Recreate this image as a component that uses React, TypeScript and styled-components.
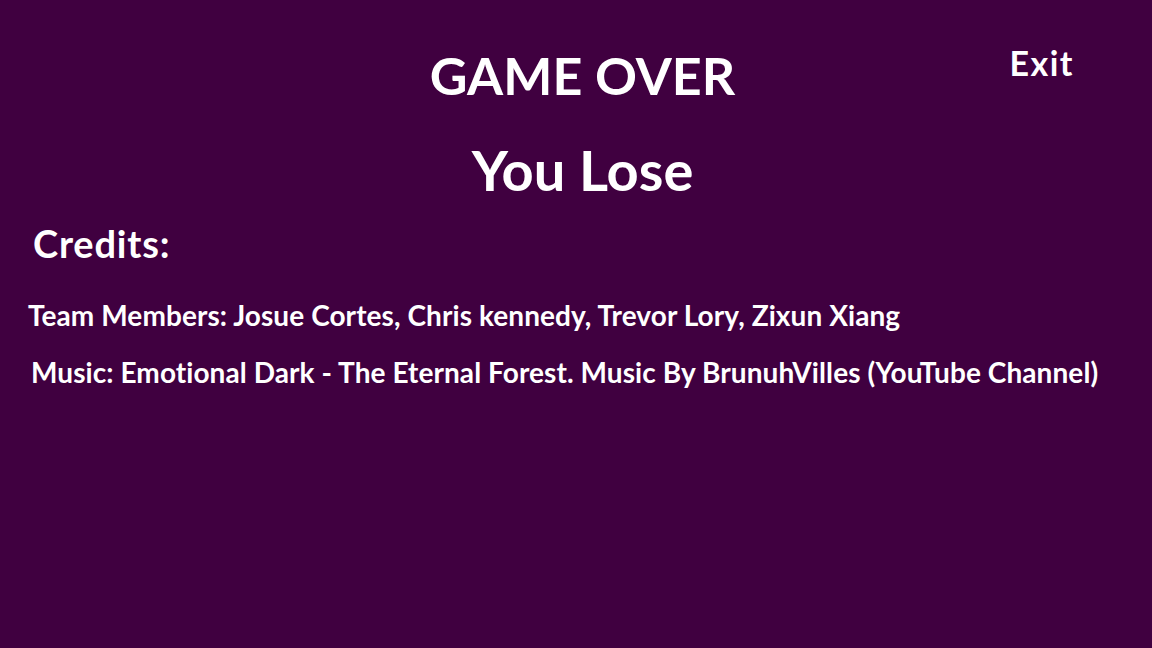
import React from "react";
import styled, { createGlobalStyle } from "styled-components";

const Global = createGlobalStyle`
  html, body { margin: 0; padding: 0; background: #400040; }
  body { font-family: "Lato", "Open Sans", sans-serif; color: #ffffff; }
  #root { width: 1152px; height: 648px; }
`;

const Page = styled.main`
  width: 1152px;
  height: 648px;
  background: #400040;
  display: flex;
  flex-direction: column;
  overflow: hidden;
`;

const Header = styled.header`
  display: grid;
  grid-template-columns: 1fr auto 1fr;
  padding: 0 78px 0 91px;
`;

const TitleBlock = styled.div`
  grid-column: 2;
  display: flex;
  flex-direction: column;
  align-items: center;
`;

const Heading = styled.h1<{ $size: number; $top: number }>`
  margin: ${(p) => p.$top}px 0 0;
  font-size: ${(p) => p.$size}px;
  line-height: 1;
  font-weight: 700;
  white-space: nowrap;
`;

const ExitButton = styled.button`
  grid-column: 3;
  justify-self: end;
  align-self: start;
  margin-top: 46px;
  padding: 0;
  border: none;
  background: none;
  color: #ffffff;
  font-family: "Lato", "Open Sans", sans-serif;
  font-size: 34px;
  letter-spacing: 1.5px;
  line-height: 1;
  font-weight: 700;
  cursor: pointer;
`;

const Credits = styled.section`
  display: flex;
  flex-direction: column;
  align-items: flex-start;
`;

const CreditsTitle = styled.h2`
  margin: 26px 0 0 33px;
  font-size: 38px;
  letter-spacing: 0.8px;
  line-height: 1;
  font-weight: 700;
`;

const CreditLine = styled.p<{ $top: number; $left: number }>`
  margin: ${(p) => p.$top}px 0 0 ${(p) => p.$left}px;
  font-size: 28px;
  letter-spacing: 0.08px;
  line-height: 1;
  font-weight: 700;
  white-space: nowrap;
`;

export default function App() {
  return (
    <>
      <Global />
      <Page>
        <Header>
          <TitleBlock>
            <Heading $size={52} $top={49}>GAME OVER</Heading>
            <Heading $size={56} $top={41}>You Lose</Heading>
          </TitleBlock>
          <ExitButton>Exit</ExitButton>
        </Header>
        <Credits>
          <CreditsTitle>Credits:</CreditsTitle>
          <CreditLine $top={39} $left={28}>
            Team Members: Josue Cortes, Chris kennedy, Trevor Lory, Zixun Xiang
          </CreditLine>
          <CreditLine $top={29} $left={31}>
            Music: Emotional Dark - The Eternal Forest. Music By BrunuhVilles (YouTube Channel)
          </CreditLine>
        </Credits>
      </Page>
    </>
  );
}
